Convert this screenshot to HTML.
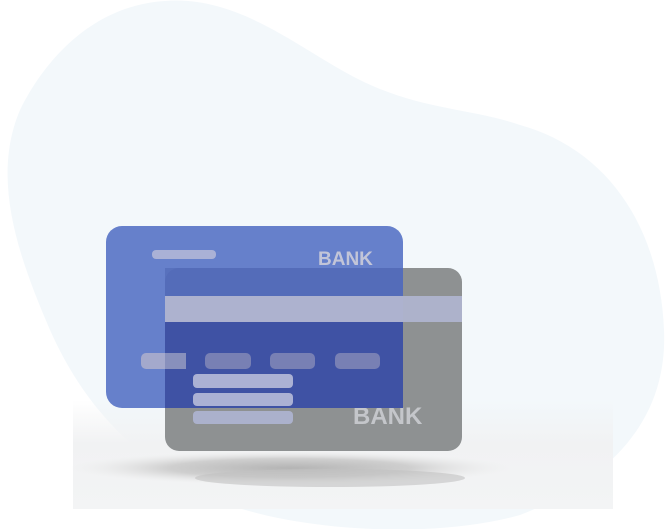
<!DOCTYPE html>
<html><head><style>
html,body{margin:0;padding:0;background:#fff;width:667px;height:529px;overflow:hidden;font-family:"Liberation Sans",sans-serif}
.a{position:absolute}
</style></head><body>
<svg class="a" style="left:0;top:0" width="667" height="529">
<defs>
<radialGradient id="sh" cx="50%" cy="50%" r="50%"><stop offset="0" stop-color="#b4b4b4"/><stop offset="0.55" stop-color="#cfcfcf"/><stop offset="1" stop-color="#ececec" stop-opacity="0"/></radialGradient>
<linearGradient id="fl" x1="0" y1="0" x2="0" y2="1"><stop offset="0" stop-color="#f1f2f3" stop-opacity="0"/><stop offset="0.4" stop-color="#f1f2f3"/><stop offset="1" stop-color="#f3f4f5"/></linearGradient>
</defs>
<path d="M165 1 C240 -5 300 50 360 80 C420 110 470 108 520 125 C610 150 660 230 664 330 C668 420 610 480 520 515 C430 540 300 530 230 505 C150 470 90 420 50 330 C20 260 -10 180 20 110 C50 50 100 5 165 1 Z" fill="#f3f8fb"/>
<rect x="73" y="400" width="540" height="109" fill="url(#fl)"/>
<ellipse cx="290" cy="468" rx="220" ry="17" fill="url(#sh)"/>
<ellipse cx="330" cy="478" rx="135" ry="9" fill="#c2c2c2" opacity="0.6"/>
<rect x="165" y="268" width="297" height="183" rx="14" fill="#8e9192"/>
<rect x="165" y="296" width="297" height="26" fill="#adb2cb"/>
<text x="353" y="424" font-family="Liberation Sans" font-weight="bold" font-size="24" fill="#c4c6ca">BANK</text>
<path d="M122 226 H387 A16 16 0 0 1 403 242 V392 A16 16 0 0 1 387 408 H122 A16 16 0 0 1 106 392 V242 A16 16 0 0 1 122 226 Z" fill="#6680cb"/>
<path d="M179 268 H403 V408 H165 V282 A14 14 0 0 1 179 268 Z" fill="#3f52a4"/>
<rect x="165" y="268" width="238" height="28" fill="#566fbb" opacity="0.9"/>
<rect x="152" y="250" width="64" height="9" rx="4" fill="#aab1d6"/>
<text x="318" y="265" font-family="Liberation Sans" font-weight="bold" font-size="19" fill="#c2c5d8">BANK</text>
<rect x="165" y="296" width="238" height="26" fill="#adb2cf"/>
<rect x="141" y="353" width="45" height="16" rx="5" fill="#a4a9cc"/>
<rect x="165" y="353" width="21" height="16" fill="#8890bc"/>
<rect x="205" y="353" width="46" height="16" rx="5" fill="#7880b4"/>
<rect x="270" y="353" width="45" height="16" rx="5" fill="#7880b4"/>
<rect x="335" y="353" width="45" height="16" rx="5" fill="#7880b4"/>
<rect x="193" y="374" width="100" height="14" rx="4" fill="#abb1d4"/>
<rect x="193" y="393" width="100" height="13" rx="4" fill="#abb1d4"/>
<rect x="193" y="411" width="100" height="13" rx="4" fill="#abb1cc"/>
</svg>
</body></html>
